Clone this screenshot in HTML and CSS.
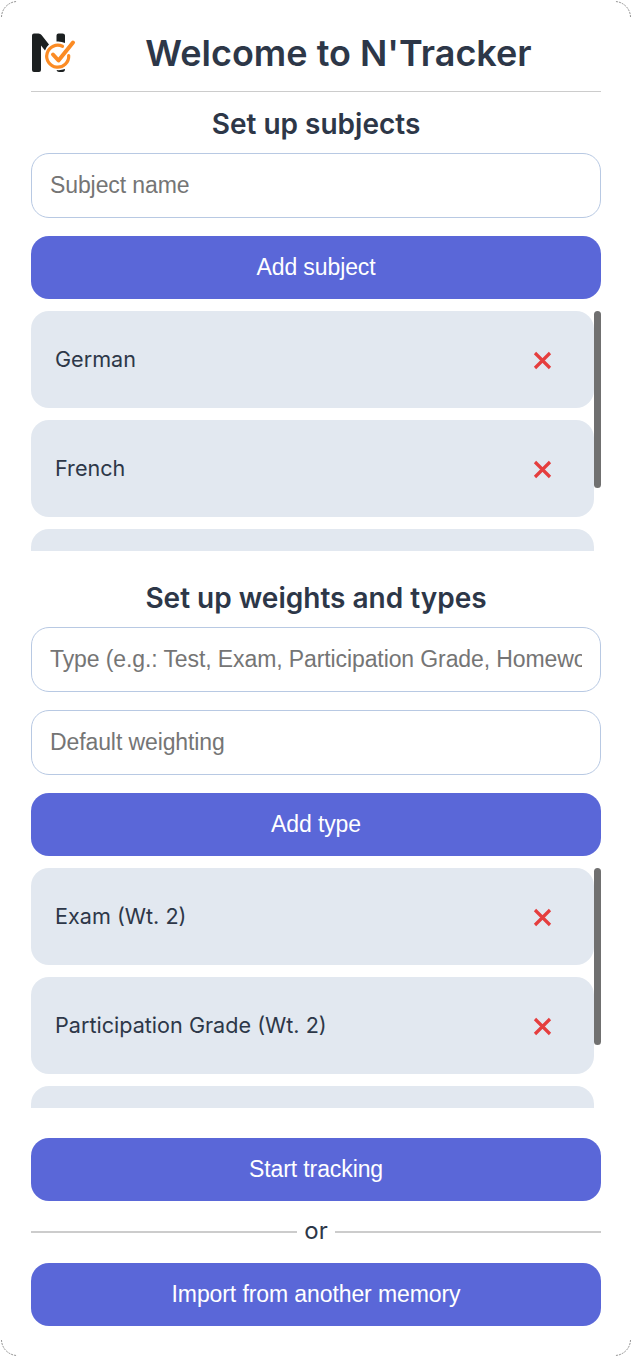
FILE: index.html
```html
<!DOCTYPE html>
<html lang="en">
<head>
<meta charset="utf-8">
<title>N'Tracker</title>
<link rel="stylesheet" href="styles.css">
</head>
<body>
<main class="card">
  <svg class="corner corner-tl" viewBox="0 0 18 18"><path d="M1.5 17A16 16 0 0 1 17 1.5"/></svg>
  <svg class="corner corner-tr" viewBox="0 0 18 18"><path d="M1.5 17A16 16 0 0 1 17 1.5"/></svg>
  <svg class="corner corner-bl" viewBox="0 0 18 18"><path d="M1.5 17A16 16 0 0 1 17 1.5"/></svg>
  <svg class="corner corner-br" viewBox="0 0 18 18"><path d="M1.5 17A16 16 0 0 1 17 1.5"/></svg>
  <header class="header">
    <svg class="logo" viewBox="0 0 46 42" fill="none">
      <path d="M1 3.500Q1 1.500 3 1.500H7.500Q9.500 1.500 10.500 3L18 12.500Q15 15 14 18.500L10 13.500V38Q10 40 8 40H3Q1 40 1 38Z" fill="#1c2021"/>
      <path d="M25.500 9.500V3.500Q25.500 1.500 27.500 1.500H31.500Q34 1.500 34 3.500V11Q30 9 25.500 9.500ZM25.500 38Q30 38.500 34 37Q34 40 31.500 40H28Q26 40 25.500 38Z" fill="#1c2021"/>
      <path d="M31.500 14.300A11 11 0 1 0 37.700 23.500" stroke="#fb8b24" stroke-width="3.200" stroke-linecap="round"/>
      <path d="M22 22.500L27.500 28.500L42 10.500" stroke="#fb8b24" stroke-width="4" stroke-linecap="round" stroke-linejoin="round"/>
    </svg>
    <h1 class="title">Welcome to N'Tracker</h1>
  </header>
  <h2 class="heading">Set up subjects</h2>
  <input class="field" placeholder="Subject name">
  <button class="button">Add subject</button>
  <div class="scroller">
    <ul class="list">
      <li class="item"><span>German</span><svg class="remove" viewBox="0 0 19 19"><path d="M2 2L17 17M17 2L2 17"/></svg></li>
      <li class="item"><span>French</span><svg class="remove" viewBox="0 0 19 19"><path d="M2 2L17 17M17 2L2 17"/></svg></li>
      <li class="item"></li>
    </ul>
    <div class="thumb"></div>
  </div>
  <h2 class="heading heading-second">Set up weights and types</h2>
  <input class="field" placeholder="Type (e.g.: Test, Exam, Participation Grade, Homework)">
  <input class="field" placeholder="Default weighting">
  <button class="button">Add type</button>
  <div class="scroller">
    <ul class="list">
      <li class="item"><span>Exam (Wt. 2)</span><svg class="remove" viewBox="0 0 19 19"><path d="M2 2L17 17M17 2L2 17"/></svg></li>
      <li class="item"><span>Participation Grade (Wt. 2)</span><svg class="remove" viewBox="0 0 19 19"><path d="M2 2L17 17M17 2L2 17"/></svg></li>
      <li class="item"></li>
    </ul>
    <div class="thumb"></div>
  </div>
  <button class="button start">Start tracking</button>
  <div class="divider"><span class="or">or</span></div>
  <button class="button">Import from another memory</button>
</main>
</body>
</html>
```
FILE: styles.css
```css
* { box-sizing: border-box; }
body { margin: 0; background: #fff; color: #2d3748; font-family: Inter, sans-serif; }
.card { position: relative; display: flex; flex-direction: column; height: 1357px; padding: 24px 31px 0; overflow: hidden; }
.corner { position: absolute; width: 18px; height: 18px; fill: none; stroke: #777; stroke-width: .8; stroke-dasharray: 2 1; }
.corner-tl { left: 0; top: 0; }
.corner-tr { right: 0; top: 0; transform: scaleX(-1); }
.corner-bl { left: 0; bottom: 0; transform: scaleY(-1); }
.corner-br { right: 0; bottom: 0; transform: scale(-1); }
.header { display: flex; align-items: center; height: 68px; padding-bottom: 10px; border-bottom: 1px solid #ccc; flex: none; }
.logo { width: 46px; height: 42px; flex: none; }
.title { flex: 1; margin: 0 1px 0 0; text-align: center; font-size: 36px; line-height: 44px; font-weight: 600; }
.heading { margin: 14px 0 11px; height: 36px; line-height: 36px; text-align: center; font-size: 28px; font-weight: 600; flex: none; }
.heading-second { margin: 29px 0 11px; }
.field { width: 100%; height: 65px; flex: none; margin: 0 0 18px; padding: 0 18px; border: 1px solid #b8c9e3; border-radius: 18px; background: #fff; font: 23px "Liberation Sans", sans-serif; letter-spacing: -.1px; }
.field::placeholder { color: #757575; }
.button { width: 100%; height: 63px; flex: none; margin: 0; padding: 0; border: 0; border-radius: 18px; background: #5a67d8; color: #fff; font: 23px "Liberation Sans", sans-serif; letter-spacing: -.1px; }
.scroller { display: flex; flex: none; height: 240px; margin-top: 12px; overflow: hidden; }
.list { flex: 1; display: flex; flex-direction: column; gap: 12px; margin: 0; padding: 0; list-style: none; }
.item { display: flex; flex: none; align-items: center; justify-content: space-between; height: 97px; padding: 0 42px 1px 24px; border-radius: 18px; background: #e2e8f0; font-size: 21.6px; }
.remove { width: 19px; height: 19px; stroke: #e53e3e; stroke-width: 3.2; margin: 3px 0 0; }
.thumb { width: 7px; height: 177px; border-radius: 4px; background: #707070; }
.start { margin-top: 30px; }
.divider { display: flex; align-items: center; flex: none; gap: 7.5px; height: 62px; font-size: 24px; }
.divider::before, .divider::after { content: ""; flex: 1; height: 2px; background: #ccc; }
.or { padding-bottom: 3px; }
```
